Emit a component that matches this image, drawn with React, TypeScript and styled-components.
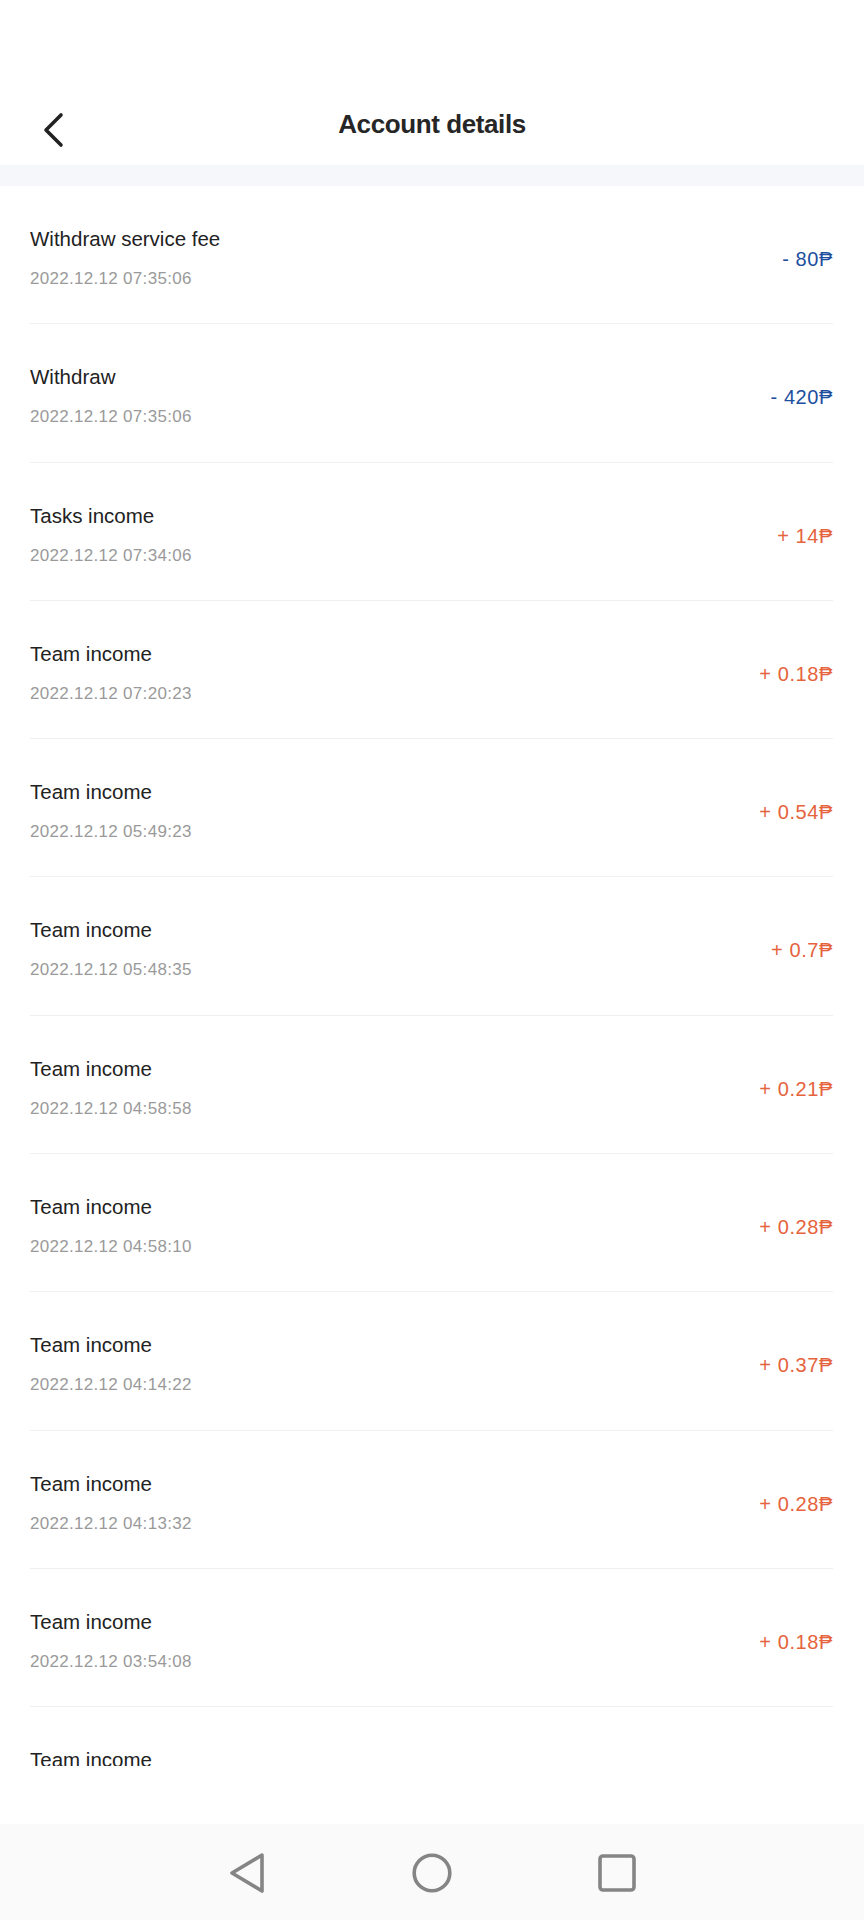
import styled, { createGlobalStyle } from "styled-components";

const GlobalStyle = createGlobalStyle`
  html, body {
    margin: 0;
    padding: 0;
    background: #ffffff;
  }
  body {
    font-family: "Liberation Sans", Arial, "DejaVu Sans", sans-serif;
    color: #222222;
  }
`;

const Page = styled.div`
  width: 864px;
  height: 1920px;
  display: flex;
  flex-direction: column;
  background: #ffffff;
  overflow: hidden;
`;

const StatusBar = styled.div`
  height: 82px;
  flex-shrink: 0;
`;

const Header = styled.header`
  height: 83px;
  flex-shrink: 0;
  display: grid;
  grid-template-columns: 120px 1fr 120px;
  align-items: center;

  h1 {
    margin: 0;
    text-align: center;
    font-size: 26px;
    line-height: 30px;
    font-weight: 700;
    letter-spacing: -0.4px;
    color: #262626;
  }
`;

const BackButton = styled.button`
  justify-self: start;
  margin: 13px 0 0 42px;
  padding: 0;
  border: none;
  background: none;
  display: flex;
  color: #222222;
`;

const Band = styled.div`
  height: 21px;
  flex-shrink: 0;
  background: #f6f7fb;
`;

// the last row is cut off by the bottom edge of the scroll area
const List = styled.ul`
  list-style: none;
  margin: 0;
  padding: 0 31px 0 30px;
  height: 1580px;
  flex-shrink: 0;
  overflow: hidden;
`;

const Row = styled.li`
  box-sizing: border-box;
  height: 138.3px;
  padding-top: 41px;
  border-bottom: 1px solid #f0f0f0;
  display: flex;
  justify-content: space-between;
  align-items: flex-start;
`;

const Info = styled.div`
  display: flex;
  flex-direction: column;
  gap: 18px;
`;

const Title = styled.span`
  font-size: 20.5px;
  line-height: 24px;
  color: #222222;
`;

const Time = styled.span`
  font-size: 17px;
  line-height: 20px;
  letter-spacing: 0.3px;
  color: #9a9a9a;
`;

const Amount = styled.span<{ $negative: boolean }>`
  margin-top: 21px;
  font-size: 20px;
  line-height: 22px;
  letter-spacing: 0.6px;
  color: ${({ $negative }) => ($negative ? "#1d4f9e" : "#e5633d")};
`;

const NavBar = styled.nav`
  margin-top: auto;
  height: 96px;
  flex-shrink: 0;
  background: #fafafa;
  display: flex;
  align-items: center;
  justify-content: center;
  gap: 145px;
  padding-top: 2px;
  box-sizing: border-box;

  svg {
    display: block;
  }
`;

type Entry = { title: string; time: string; amount: string; negative?: boolean };

const entries: Entry[] = [
  { title: "Withdraw service fee", time: "2022.12.12 07:35:06", amount: "- 80₱", negative: true },
  { title: "Withdraw", time: "2022.12.12 07:35:06", amount: "- 420₱", negative: true },
  { title: "Tasks income", time: "2022.12.12 07:34:06", amount: "+ 14₱" },
  { title: "Team income", time: "2022.12.12 07:20:23", amount: "+ 0.18₱" },
  { title: "Team income", time: "2022.12.12 05:49:23", amount: "+ 0.54₱" },
  { title: "Team income", time: "2022.12.12 05:48:35", amount: "+ 0.7₱" },
  { title: "Team income", time: "2022.12.12 04:58:58", amount: "+ 0.21₱" },
  { title: "Team income", time: "2022.12.12 04:58:10", amount: "+ 0.28₱" },
  { title: "Team income", time: "2022.12.12 04:14:22", amount: "+ 0.37₱" },
  { title: "Team income", time: "2022.12.12 04:13:32", amount: "+ 0.28₱" },
  { title: "Team income", time: "2022.12.12 03:54:08", amount: "+ 0.18₱" },
  { title: "Team income", time: "2022.12.12 03:41:19", amount: "+ 0.21₱" },
];

export default function App() {
  return (
    <>
      <GlobalStyle />
      <Page>
        <StatusBar />
        <Header>
          <BackButton aria-label="Back">
            <svg width="22" height="36" viewBox="0 0 22 36" fill="none">
              <path
                d="M19 3 L4 18 L19 33"
                stroke="currentColor"
                strokeWidth="3.6"
                strokeLinecap="round"
                strokeLinejoin="round"
              />
            </svg>
          </BackButton>
          <h1>Account details</h1>
          <span />
        </Header>
        <Band />
        <List>
          {entries.map((e, i) => (
            <Row key={i}>
              <Info>
                <Title>{e.title}</Title>
                <Time>{e.time}</Time>
              </Info>
              <Amount $negative={!!e.negative}>{e.amount}</Amount>
            </Row>
          ))}
        </List>
        <NavBar>
          <svg width="40" height="42" viewBox="0 0 40 42" fill="none">
            <path
              d="M35 3 L5 21 L35 39 Z"
              stroke="#858585"
              strokeWidth="3.6"
              strokeLinejoin="round"
            />
          </svg>
          <svg width="40" height="42" viewBox="0 0 40 42" fill="none">
            <circle cx="20" cy="21" r="17.8" stroke="#858585" strokeWidth="3.6" />
          </svg>
          <svg width="40" height="42" viewBox="0 0 40 42" fill="none">
            <rect x="3" y="4" width="34" height="34" rx="3" stroke="#858585" strokeWidth="3.6" />
          </svg>
        </NavBar>
      </Page>
    </>
  );
}
